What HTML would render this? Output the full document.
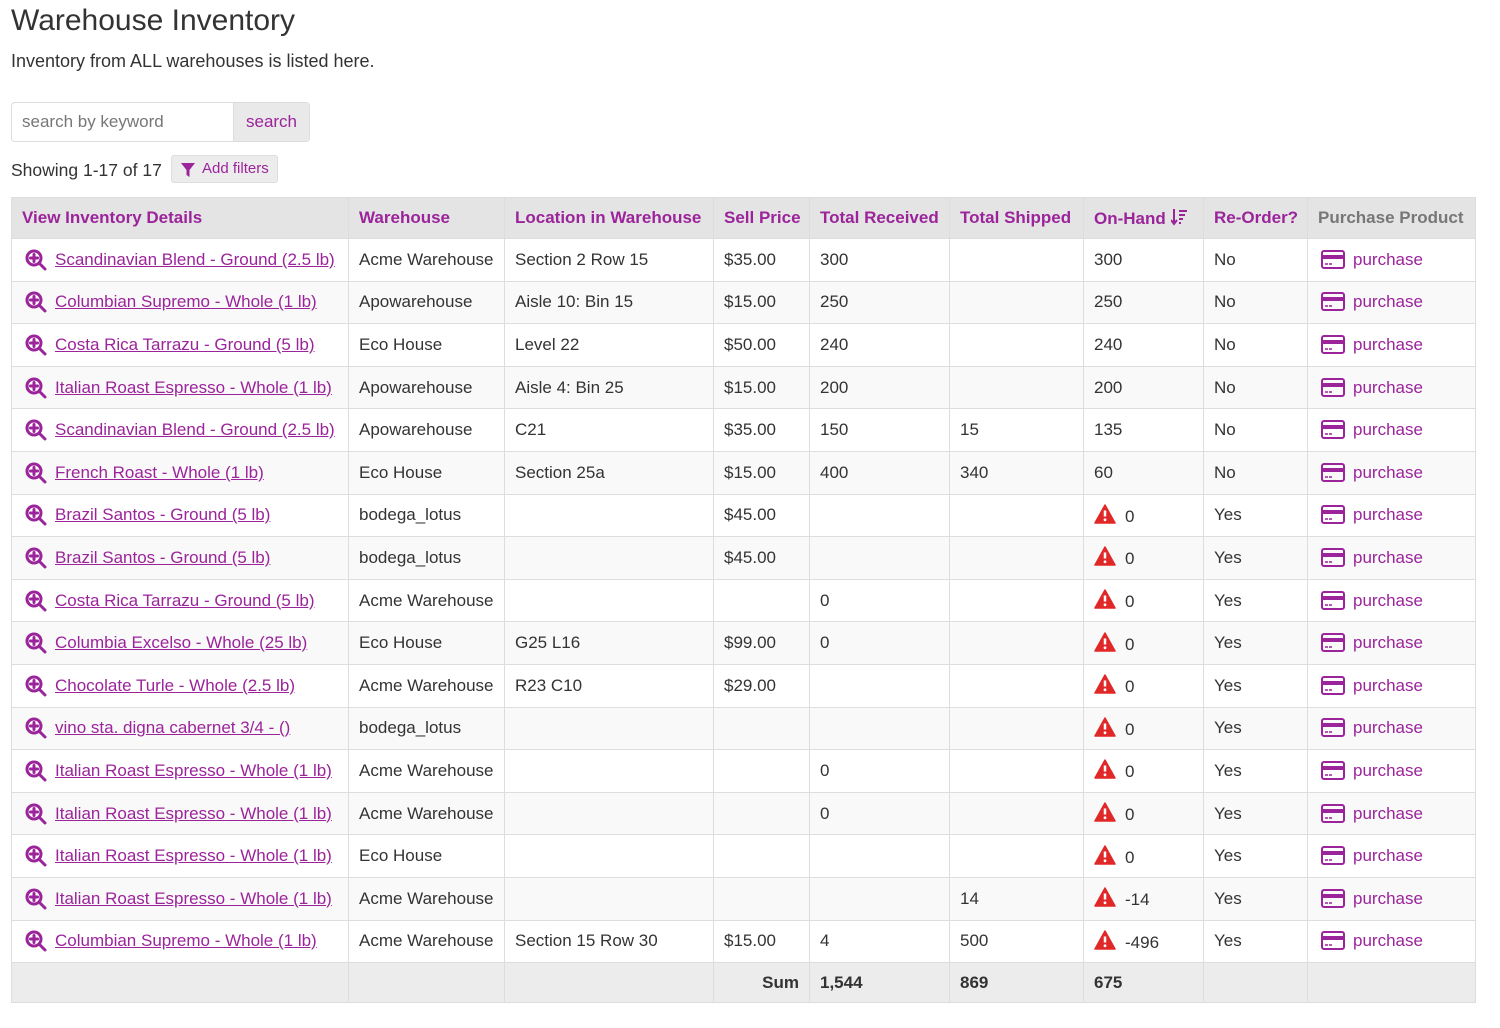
<!DOCTYPE html>
<html><head><meta charset="utf-8">
<style>
body{margin:0;background:#fff;font-family:"Liberation Sans",sans-serif;color:#333;width:1500px;height:1028px;overflow:hidden;position:relative}
.p{color:#9b249b}
h1{position:absolute;left:11px;top:4px;margin:0;font-weight:normal;font-size:30px;color:#333}
.sub{position:absolute;left:11px;top:51px;font-size:18px}
.search{position:absolute;left:11px;top:102px;width:297px;height:38px;border:1px solid #ddd;border-radius:4px;overflow:hidden;display:flex}
.search .in{width:222px;border-right:1px solid #ddd;font-size:17px;color:#777;padding:9px 10px;box-sizing:border-box}
.search .bt{flex:1;background:#e9e9e9;color:#9b249b;font-size:17px;text-align:center;line-height:38px}
.show{position:absolute;left:11px;top:160px;font-size:17.5px}
.filt{position:absolute;left:171px;top:155px;width:107px;height:28px;background:#ececec;border:1px solid #ddd;border-radius:3px;font-size:15px;color:#9b249b;line-height:28px;box-sizing:border-box}
.filt svg{position:absolute;left:8px;top:6px}
.filt span{position:absolute;left:30px;top:-1px}
table{position:absolute;left:11px;top:197px;border-collapse:collapse;table-layout:fixed;width:1464px;font-size:17px}
th,td{border:1px solid #ddd;padding:0 10px;white-space:nowrap;overflow:hidden;text-align:left}
th{height:40px;background:#e4e4e4;color:#9b249b;font-weight:bold;font-size:17px}
th.g{color:#777}
td{height:41.6px}
tbody tr:nth-child(even) td{background:#f9f9f9}
tfoot td{background:#ececec;font-weight:bold;height:39px}
a{color:#9b249b;text-decoration:underline}
.mg{vertical-align:-6px;margin-right:8px;margin-left:3px}
.wr{vertical-align:-3px;margin-right:9px}
.cc{vertical-align:-5px;margin-right:8px;margin-left:3px}
</style></head><body>
<h1>Warehouse Inventory</h1>
<div class="sub">Inventory from ALL warehouses is listed here.</div>
<div class="search"><div class="in">search by keyword</div><div class="bt">search</div></div>
<div class="show">Showing 1-17 of 17</div>
<div class="filt"><svg width="16" height="16" viewBox="0 0 16 16"><path d="M1 1h14l-5.5 7v7l-3-2V8z" fill="#9b249b"/></svg><span>Add filters</span></div>
<svg width="0" height="0" style="position:absolute"><defs>
<g id="mg"><circle cx="9" cy="9" r="7" fill="none" stroke="#9b249b" stroke-width="3"/><path d="M14 14l6 6M9 5.5v7M5.5 9h7" stroke="#9b249b" stroke-width="3" stroke-linecap="round"/></g>
<g id="cc"><rect x="1" y="1" width="22" height="17" rx="2" fill="none" stroke="#9b249b" stroke-width="2"/><rect x="1" y="5" width="22" height="4" fill="#9b249b"/><path d="M4 14h3M8 14h3" stroke="#9b249b" stroke-width="1.5"/></g>
<g id="wr"><path d="M11 1L21 19H1z" fill="#e02828" stroke="#e02828" stroke-width="1.5" stroke-linejoin="round"/><path d="M11 6.5v6" stroke="#fff" stroke-width="2.5"/><circle cx="11" cy="15.8" r="1.4" fill="#fff"/></g>
</defs></svg>
<table>
<colgroup><col style="width:337px"><col style="width:156px"><col style="width:209px"><col style="width:96px"><col style="width:140px"><col style="width:134px"><col style="width:120px"><col style="width:104px"><col style="width:168px"></colgroup>
<thead><tr><th>View Inventory Details</th><th>Warehouse</th><th>Location in Warehouse</th><th>Sell Price</th><th>Total Received</th><th>Total Shipped</th><th>On-Hand <svg width="16" height="18" viewBox="0 0 16 18" style="vertical-align:-2px"><path d="M3 1v14M0 12l3 4 3-4M8 3h8M8 7h6M8 11h4M8 15h2" stroke="#9b249b" stroke-width="2" fill="none"/></svg></th><th>Re-Order?</th><th class="g">Purchase Product</th></tr></thead>
<tbody>
<tr><td><svg class="mg" width="22" height="22"><use href="#mg"/></svg><a>Scandinavian Blend - Ground (2.5 lb)</a></td><td>Acme Warehouse</td><td>Section 2 Row 15</td><td>$35.00</td><td>300</td><td></td><td>300</td><td>No</td><td><svg class="cc" width="24" height="20"><use href="#cc"/></svg><span class="p">purchase</span></td></tr>
<tr><td><svg class="mg" width="22" height="22"><use href="#mg"/></svg><a>Columbian Supremo - Whole (1 lb)</a></td><td>Apowarehouse</td><td>Aisle 10: Bin 15</td><td>$15.00</td><td>250</td><td></td><td>250</td><td>No</td><td><svg class="cc" width="24" height="20"><use href="#cc"/></svg><span class="p">purchase</span></td></tr>
<tr><td><svg class="mg" width="22" height="22"><use href="#mg"/></svg><a>Costa Rica Tarrazu - Ground (5 lb)</a></td><td>Eco House</td><td>Level 22</td><td>$50.00</td><td>240</td><td></td><td>240</td><td>No</td><td><svg class="cc" width="24" height="20"><use href="#cc"/></svg><span class="p">purchase</span></td></tr>
<tr><td><svg class="mg" width="22" height="22"><use href="#mg"/></svg><a>Italian Roast Espresso - Whole (1 lb)</a></td><td>Apowarehouse</td><td>Aisle 4: Bin 25</td><td>$15.00</td><td>200</td><td></td><td>200</td><td>No</td><td><svg class="cc" width="24" height="20"><use href="#cc"/></svg><span class="p">purchase</span></td></tr>
<tr><td><svg class="mg" width="22" height="22"><use href="#mg"/></svg><a>Scandinavian Blend - Ground (2.5 lb)</a></td><td>Apowarehouse</td><td>C21</td><td>$35.00</td><td>150</td><td>15</td><td>135</td><td>No</td><td><svg class="cc" width="24" height="20"><use href="#cc"/></svg><span class="p">purchase</span></td></tr>
<tr><td><svg class="mg" width="22" height="22"><use href="#mg"/></svg><a>French Roast - Whole (1 lb)</a></td><td>Eco House</td><td>Section 25a</td><td>$15.00</td><td>400</td><td>340</td><td>60</td><td>No</td><td><svg class="cc" width="24" height="20"><use href="#cc"/></svg><span class="p">purchase</span></td></tr>
<tr><td><svg class="mg" width="22" height="22"><use href="#mg"/></svg><a>Brazil Santos - Ground (5 lb)</a></td><td>bodega_lotus</td><td></td><td>$45.00</td><td></td><td></td><td><svg class="wr" width="22" height="21"><use href="#wr"/></svg>0</td><td>Yes</td><td><svg class="cc" width="24" height="20"><use href="#cc"/></svg><span class="p">purchase</span></td></tr>
<tr><td><svg class="mg" width="22" height="22"><use href="#mg"/></svg><a>Brazil Santos - Ground (5 lb)</a></td><td>bodega_lotus</td><td></td><td>$45.00</td><td></td><td></td><td><svg class="wr" width="22" height="21"><use href="#wr"/></svg>0</td><td>Yes</td><td><svg class="cc" width="24" height="20"><use href="#cc"/></svg><span class="p">purchase</span></td></tr>
<tr><td><svg class="mg" width="22" height="22"><use href="#mg"/></svg><a>Costa Rica Tarrazu - Ground (5 lb)</a></td><td>Acme Warehouse</td><td></td><td></td><td>0</td><td></td><td><svg class="wr" width="22" height="21"><use href="#wr"/></svg>0</td><td>Yes</td><td><svg class="cc" width="24" height="20"><use href="#cc"/></svg><span class="p">purchase</span></td></tr>
<tr><td><svg class="mg" width="22" height="22"><use href="#mg"/></svg><a>Columbia Excelso - Whole (25 lb)</a></td><td>Eco House</td><td>G25 L16</td><td>$99.00</td><td>0</td><td></td><td><svg class="wr" width="22" height="21"><use href="#wr"/></svg>0</td><td>Yes</td><td><svg class="cc" width="24" height="20"><use href="#cc"/></svg><span class="p">purchase</span></td></tr>
<tr><td><svg class="mg" width="22" height="22"><use href="#mg"/></svg><a>Chocolate Turle - Whole (2.5 lb)</a></td><td>Acme Warehouse</td><td>R23 C10</td><td>$29.00</td><td></td><td></td><td><svg class="wr" width="22" height="21"><use href="#wr"/></svg>0</td><td>Yes</td><td><svg class="cc" width="24" height="20"><use href="#cc"/></svg><span class="p">purchase</span></td></tr>
<tr><td><svg class="mg" width="22" height="22"><use href="#mg"/></svg><a>vino sta. digna cabernet 3/4 - ()</a></td><td>bodega_lotus</td><td></td><td></td><td></td><td></td><td><svg class="wr" width="22" height="21"><use href="#wr"/></svg>0</td><td>Yes</td><td><svg class="cc" width="24" height="20"><use href="#cc"/></svg><span class="p">purchase</span></td></tr>
<tr><td><svg class="mg" width="22" height="22"><use href="#mg"/></svg><a>Italian Roast Espresso - Whole (1 lb)</a></td><td>Acme Warehouse</td><td></td><td></td><td>0</td><td></td><td><svg class="wr" width="22" height="21"><use href="#wr"/></svg>0</td><td>Yes</td><td><svg class="cc" width="24" height="20"><use href="#cc"/></svg><span class="p">purchase</span></td></tr>
<tr><td><svg class="mg" width="22" height="22"><use href="#mg"/></svg><a>Italian Roast Espresso - Whole (1 lb)</a></td><td>Acme Warehouse</td><td></td><td></td><td>0</td><td></td><td><svg class="wr" width="22" height="21"><use href="#wr"/></svg>0</td><td>Yes</td><td><svg class="cc" width="24" height="20"><use href="#cc"/></svg><span class="p">purchase</span></td></tr>
<tr><td><svg class="mg" width="22" height="22"><use href="#mg"/></svg><a>Italian Roast Espresso - Whole (1 lb)</a></td><td>Eco House</td><td></td><td></td><td></td><td></td><td><svg class="wr" width="22" height="21"><use href="#wr"/></svg>0</td><td>Yes</td><td><svg class="cc" width="24" height="20"><use href="#cc"/></svg><span class="p">purchase</span></td></tr>
<tr><td><svg class="mg" width="22" height="22"><use href="#mg"/></svg><a>Italian Roast Espresso - Whole (1 lb)</a></td><td>Acme Warehouse</td><td></td><td></td><td></td><td>14</td><td><svg class="wr" width="22" height="21"><use href="#wr"/></svg>-14</td><td>Yes</td><td><svg class="cc" width="24" height="20"><use href="#cc"/></svg><span class="p">purchase</span></td></tr>
<tr><td><svg class="mg" width="22" height="22"><use href="#mg"/></svg><a>Columbian Supremo - Whole (1 lb)</a></td><td>Acme Warehouse</td><td>Section 15 Row 30</td><td>$15.00</td><td>4</td><td>500</td><td><svg class="wr" width="22" height="21"><use href="#wr"/></svg>-496</td><td>Yes</td><td><svg class="cc" width="24" height="20"><use href="#cc"/></svg><span class="p">purchase</span></td></tr>
</tbody>
<tfoot><tr><td></td><td></td><td></td><td style="text-align:right">Sum</td><td>1,544</td><td>869</td><td>675</td><td></td><td></td></tr></tfoot>
</table>
</body></html>
